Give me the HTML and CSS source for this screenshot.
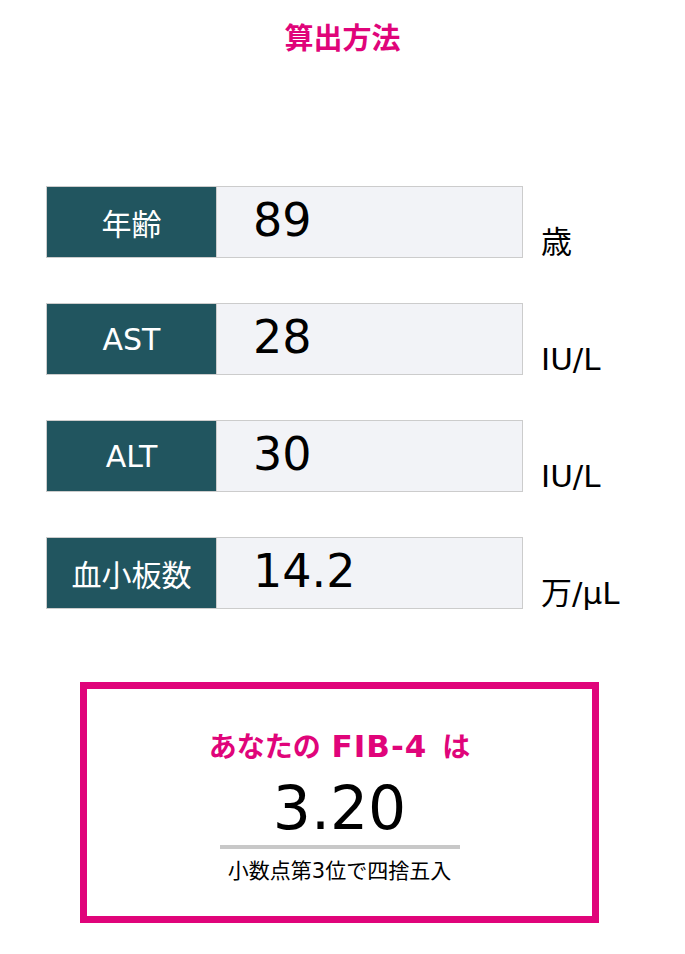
FILE: index.html
```html
<!DOCTYPE html>
<html lang="ja">
<head>
<meta charset="utf-8">
<title>算出方法</title>
<link rel="stylesheet" href="styles.css">
</head>
<body>
<main class="page">
  <h1 class="title">算出方法</h1>
  <section class="form">
    <div class="row">
      <div class="field">
        <div class="label">年齢</div>
        <div class="value">89</div>
      </div>
      <div class="unit">歳</div>
    </div>
    <div class="row">
      <div class="field">
        <div class="label">AST</div>
        <div class="value">28</div>
      </div>
      <div class="unit">IU/L</div>
    </div>
    <div class="row">
      <div class="field">
        <div class="label">ALT</div>
        <div class="value">30</div>
      </div>
      <div class="unit">IU/L</div>
    </div>
    <div class="row">
      <div class="field">
        <div class="label">血小板数</div>
        <div class="value">14.2</div>
      </div>
      <div class="unit">万/μL</div>
    </div>
  </section>
  <section class="result">
    <div class="result-head"><span class="kana">あなたの</span> <span class="fib">FIB-4</span> <span class="kana">は</span></div>
    <div class="result-num">3.20</div>
    <div class="result-bar"></div>
    <div class="result-note">小数点第3位で四捨五入</div>
  </section>
</main>
</body>
</html>
```

FILE: styles.css
```css
* { box-sizing: border-box; }
html, body { margin: 0; padding: 0; background: #ffffff; }
body {
  font-family: "DejaVu Sans", "Noto Sans CJK JP", sans-serif;
  color: #000;
}
.page {
  width: 685px;
  padding-top: 17px;
}
.title {
  margin: 0;
  text-align: center;
  font-family: "Noto Sans CJK JP", sans-serif;
  font-size: 29px;
  line-height: 38px;
  font-weight: 700;
  color: #e0047a;
}
.form {
  margin-top: 131px;
  padding-left: 46px;
  display: flex;
  flex-direction: column;
  gap: 45px;
}
.row {
  display: flex;
  align-items: flex-end;
}
.field {
  display: flex;
  width: 477px;
  height: 72px;
  border: 1px solid #cccccc;
}
.label {
  width: 169px;
  background: #21555f;
  color: #ffffff;
  font-size: 30px;
  display: flex;
  align-items: center;
  justify-content: center;
}
.value {
  flex: 1;
  background: #f2f3f7;
  border-left: 1px solid #cccccc;
  font-size: 46px;
  line-height: 66px;
  padding-left: 36px;
}
.unit {
  margin-left: 18px;
  font-size: 31px;
  line-height: 36px;
  margin-bottom: -2px;
}
.result {
  margin: 73px 0 0 80px;
  width: 519px;
  height: 241px;
  border: 7px solid #e0047a;
  padding-top: 37px;
  display: flex;
  flex-direction: column;
  align-items: center;
}
.result-head {
  font-size: 28px;
  line-height: 40px;
  color: #e0047a;
  font-weight: 700;
}
.result-head .kana { font-size: 28px; }
.result-head .fib { font-size: 31px; letter-spacing: 1px; margin: 0 5px 0 1px; }
.result-num {
  margin-top: 5px;
  font-size: 60px;
  line-height: 70px;
}
.result-bar {
  width: 240px;
  height: 4px;
  background: #c8c8c8;
  margin-top: 2px;
}
.result-note {
  margin-top: 7px;
  font-size: 21px;
  line-height: 30px;
}
```
